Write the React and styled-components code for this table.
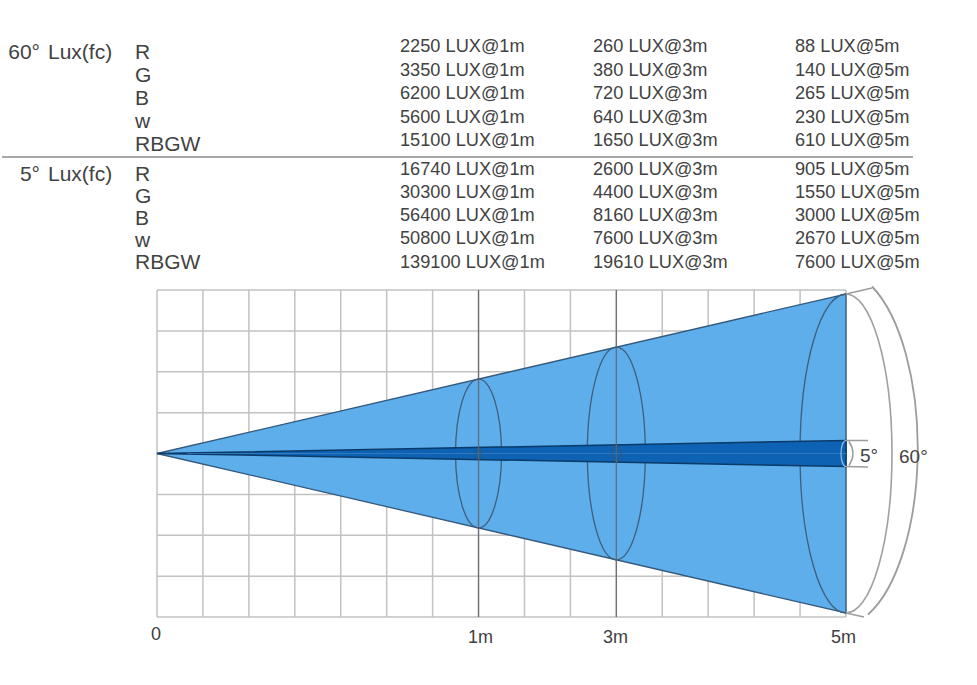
import React from 'react';
import styled, { createGlobalStyle } from 'styled-components';

const GlobalStyle = createGlobalStyle`
  html, body {
    margin: 0;
    padding: 0;
    background: #fff;
  }
  body {
    font-family: "Liberation Sans", Arial, sans-serif;
    color: #424242;
  }
`;

const groups = [
  {
    angle: '60°',
    labelPitch: 23,
    labelTop: 4.5,
    valuePitch: 23.5,
    rows: [
      ['R', '2250 LUX@1m', '260 LUX@3m', '88 LUX@5m'],
      ['G', '3350 LUX@1m', '380 LUX@3m', '140 LUX@5m'],
      ['B', '6200 LUX@1m', '720 LUX@3m', '265 LUX@5m'],
      ['w', '5600 LUX@1m', '640 LUX@3m', '230 LUX@5m'],
      ['RBGW', '15100 LUX@1m', '1650 LUX@3m', '610 LUX@5m'],
    ],
  },
  {
    angle: '5°',
    labelPitch: 22,
    labelTop: 5.4,
    valuePitch: 23.3,
    rows: [
      ['R', '16740 LUX@1m', '2600 LUX@3m', '905 LUX@5m'],
      ['G', '30300 LUX@1m', '4400 LUX@3m', '1550 LUX@5m'],
      ['B', '56400 LUX@1m', '8160 LUX@3m', '3000 LUX@5m'],
      ['w', '50800 LUX@1m', '7600 LUX@3m', '2670 LUX@5m'],
      ['RBGW', '139100 LUX@1m', '19610 LUX@3m', '7600 LUX@5m'],
    ],
  },
];

const Page = styled.div`
  width: 977px;
  height: 685px;
  overflow: hidden;
`;

const Table = styled.div`
  box-sizing: border-box;
  height: 280px;
  padding-top: 35px;
`;

const Group = styled.div`
  display: grid;
  grid-template-columns: 135px 265px 1fr;
  align-items: start;
`;

const Heading = styled.div`
  display: flex;
  gap: 8px;
  padding-top: ${p => p.$top}px;
  font-size: 21px;
  line-height: ${p => p.$pitch}px;
`;

const Angle = styled.span`
  width: 40px;
  text-align: right;
`;

const Unit = styled.span``;

const Channels = styled.div`
  display: flex;
  flex-direction: column;
  padding-top: ${p => p.$top}px;
  font-size: 21px;
  line-height: ${p => p.$pitch}px;
`;

const Channel = styled.span``;

const Values = styled.div`
  display: grid;
  grid-template-columns: 193px 202px auto;
  font-size: 18.2px;
  line-height: ${p => p.$pitch}px;
  white-space: nowrap;
`;

const Value = styled.span``;

const Divider = styled.div`
  width: 911px;
  height: 1.6px;
  margin: 1.5px 0 0 2px;
  background: #a8a8a8;
`;

const Chart = styled.svg`
  display: block;
  width: 977px;
  height: 380px;
`;

const X0 = 157;
const STEP_X = (846 - 157) / 15;
const Y0 = 290;
const STEP_Y = (617 - 290) / 8;
const CY = 453.5;

function BeamChart() {
  const verticals = Array.from({ length: 16 }, (_, k) => X0 + k * STEP_X);
  const horizontals = Array.from({ length: 9 }, (_, j) => Y0 + j * STEP_Y);
  const x1m = X0 + 7 * STEP_X;
  const x3m = X0 + 10 * STEP_X;
  const x5m = 846;
  const slope = (CY - 294) / (x5m - X0);
  const half = x => (x - X0) * slope;
  const beam = 13 / (x5m - X0);

  return (
    <Chart viewBox="0 280 977 380">
      {/* grid */}
      <g stroke="#c2c2c2" strokeWidth="1.5">
        {verticals.map(x => (
          <line key={`v${x}`} x1={x} y1={Y0} x2={x} y2={617} />
        ))}
        {horizontals.map(y => (
          <line key={`h${y}`} x1={X0} y1={y} x2={846} y2={y} />
        ))}
      </g>

      {/* 60 degree cone */}
      <polygon
        points={`${X0},${CY} ${x5m},${CY - half(x5m)} ${x5m},${CY + half(x5m)}`}
        fill="#5daeea"
        stroke="#34597c"
        strokeWidth="1.3"
      />

      {/* section ellipses */}
      <g fill="none" stroke="#3f5e7c" strokeWidth="1.3">
        <ellipse cx={x1m} cy={CY} rx="23" ry={half(x1m)} />
        <ellipse cx={x3m} cy={CY} rx="29" ry={half(x3m)} />
        <path d={`M${x5m} ${CY - half(x5m)} A46 ${half(x5m)} 0 0 0 ${x5m} ${CY + half(x5m)}`} />
      </g>
      <path
        d={`M${x5m} ${CY - half(x5m)} A46 ${half(x5m)} 0 0 1 ${x5m} ${CY + half(x5m)}`}
        fill="none"
        stroke="#a0a0a0"
        strokeWidth="1.6"
      />

      {/* 5 degree beam */}
      <polygon
        points={`${X0},${CY} ${x5m},${CY - (x5m - X0) * beam} ${x5m},${CY + (x5m - X0) * beam}`}
        fill="#0e62b3"
        stroke="#0b3a68"
        strokeWidth="1.5"
      />
      <line x1={X0 + 30} y1={CY} x2={x5m} y2={CY} stroke="#3f82c4" strokeWidth="1" opacity="0.7" />
      <path
        d={`M${x5m} ${CY - 13} A5 13 0 0 0 ${x5m} ${CY + 13}`}
        fill="none"
        stroke="#8fc0ea"
        strokeWidth="1.2"
      />
      <g fill="none" stroke="#3a5670" strokeWidth="1">
        <ellipse cx={x1m} cy={CY} rx="3" ry="5" />
        <ellipse cx={x3m} cy={CY} rx="4.5" ry="8" />
      </g>

      {/* metre lines through the cone */}
      <g stroke="#5f646b" strokeWidth="1.3" opacity="0.85">
        <line x1={x1m} y1={Y0} x2={x1m} y2={617} />
        <line x1={x3m} y1={Y0} x2={x3m} y2={617} />
      </g>

      {/* dimension marks */}
      <g fill="none" stroke="#9c9c9c" strokeWidth="1.5">
        <line x1={x5m} y1={CY - half(x5m)} x2={872} y2={CY - half(x5m) - 6} />
        <line x1={x5m} y1={CY + half(x5m)} x2={864} y2={CY + half(x5m) + 4} />
        <path d="M872 286.5 A78 178 0 0 1 868 614.5" strokeWidth="1.8" />
        <line x1={x5m} y1={CY - 13} x2={868} y2={CY - 13} />
        <line x1={x5m} y1={CY + 13} x2={868} y2={CY + 13.5} />
        <path d={`M849 ${CY - 12} Q857 ${CY} 849 ${CY + 12}`} />
      </g>

      <g fill="#444" fontFamily="'Liberation Sans', Arial, sans-serif" fontSize="19">
        <text x="860" y="462">5°</text>
        <text x="899" y="463">60°</text>
      </g>
      <g fill="#404040" fontFamily="'Liberation Sans', Arial, sans-serif" fontSize="18">
        <text x="151" y="640">0</text>
        <text x="468" y="643">1m</text>
        <text x="603" y="643">3m</text>
        <text x="831" y="643">5m</text>
      </g>
    </Chart>
  );
}

export default function App() {
  return (
    <Page>
      <GlobalStyle />
      <Table>
        {groups.map((group, i) => (
          <React.Fragment key={group.angle}>
            {i > 0 && <Divider />}
            <Group>
              <Heading $top={group.labelTop} $pitch={group.labelPitch}>
                <Angle>{group.angle}</Angle>
                <Unit>Lux(fc)</Unit>
              </Heading>
              <Channels $top={group.labelTop} $pitch={group.labelPitch}>
                {group.rows.map(row => (
                  <Channel key={row[0]}>{row[0]}</Channel>
                ))}
              </Channels>
              <Values $pitch={group.valuePitch}>
                {group.rows.map(row =>
                  row.slice(1).map(v => <Value key={v}>{v}</Value>)
                )}
              </Values>
            </Group>
          </React.Fragment>
        ))}
      </Table>
      <BeamChart />
    </Page>
  );
}
